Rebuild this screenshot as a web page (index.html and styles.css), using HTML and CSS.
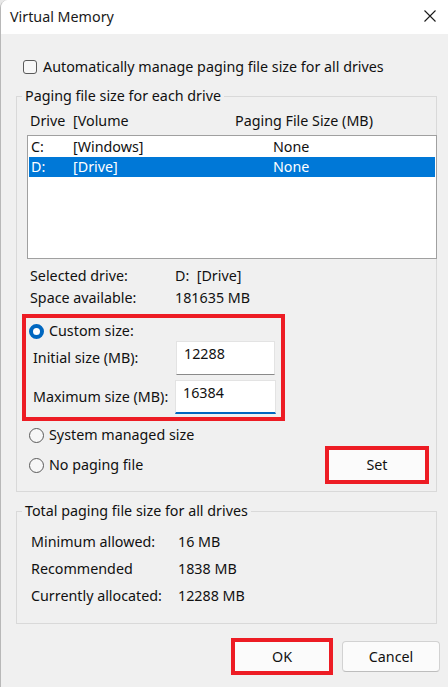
FILE: index.html
```html
<!DOCTYPE html>
<html lang="en">
<head>
<meta charset="utf-8">
<title>Virtual Memory</title>
<link rel="stylesheet" href="styles.css">
</head>
<body>
<div class="window">
  <div class="titlebar">
    <span class="title">Virtual Memory</span>
    <svg class="close" width="12" height="12" viewBox="0 0 12 12"><path d="M0.5 0.5 L11.5 11.5 M11.5 0.5 L0.5 11.5" stroke="#1a1a1a" stroke-width="1.1" fill="none"/></svg>
  </div>
  <div class="content">
    <div class="auto-row"><span class="checkbox"></span><span>Automatically manage paging file size for all drives</span></div>

    <fieldset class="group drives">
      <legend>Paging file size for each drive</legend>
      <div class="list-header"><span>Drive</span><span>[Volume</span><span>Paging File Size (MB)</span></div>
      <div class="listbox">
        <div class="list-row"><span>C:</span><span>[Windows]</span><span>None</span></div>
        <div class="list-row selected"><span>D:</span><span>[Drive]</span><span>None</span></div>
      </div>
      <div class="info">
        <span>Selected drive:</span><span>D:&nbsp; [Drive]</span>
        <span>Space available:</span><span>181635 MB</span>
      </div>
      <div class="highlight custom-box">
        <div class="radio-row"><span class="radio checked"></span><span>Custom size:</span></div>
        <div class="field-row"><span class="field-label">Initial size (MB):</span><span class="textbox">12288</span></div>
        <div class="field-row second"><span class="field-label">Maximum size (MB):</span><span class="textbox focused">16384</span></div>
      </div>
      <div class="radio-row system"><span class="radio"></span><span>System managed size</span></div>
      <div class="last-row">
        <div class="radio-row"><span class="radio"></span><span>No paging file</span></div>
        <div class="highlight set-box"><span class="button">Set</span></div>
      </div>
    </fieldset>

    <fieldset class="group totals">
      <legend>Total paging file size for all drives</legend>
      <div class="totals-grid">
        <span>Minimum allowed:</span><span>16 MB</span>
        <span>Recommended</span><span>1838 MB</span>
        <span>Currently allocated:</span><span>12288 MB</span>
      </div>
    </fieldset>

    <div class="footer">
      <div class="highlight ok-box"><span class="button">OK</span></div>
      <span class="button cancel">Cancel</span>
    </div>
  </div>
</div>
</body>
</html>
```

FILE: styles.css
```css
html, body {
  margin: 0;
  padding: 0;
  background: #e9e9e9;
}
body {
  width: 448px;
  height: 687px;
  overflow: hidden;
  font-family: "Noto Sans", "Open Sans", sans-serif;
  font-size: 14.3px;
  line-height: 20px;
  color: #111;
}
.window {
  height: 687px;
  background: #f0f0f0;
  border-left: 1px solid #b8b8b8;
  border-top-left-radius: 8px;
  overflow: hidden;
}
.titlebar {
  height: 34px;
  background: #fff;
  display: flex;
  align-items: center;
  justify-content: space-between;
  padding: 0 12px 0 9px;
}
.title {
  font-size: 14.3px;
  color: #1a1a1a;
}
.close {
  margin-top: -2px;
}
.content {
  padding: 0 11px 0 15px;
}
.auto-row {
  display: flex;
  align-items: center;
  gap: 6px;
  margin: 23px 0 0 7px;
  height: 20px;
}
.checkbox {
  width: 14px;
  height: 14px;
  box-sizing: border-box;
  border: 1px solid #5a5a5a;
  border-radius: 3px;
  background: #f7f7f7;
}
.group {
  margin: 9px 0 0 0;
  padding: 0;
  border: 1px solid #d9d9d9;
  min-width: 0;
}
.group legend {
  margin-left: 5px;
  padding: 0 3px;
  line-height: 20px;
}
.list-header {
  display: grid;
  grid-template-columns: 43px 162px auto;
  margin-top: 5px;
  padding-left: 13px;
}
.listbox {
  margin: 4px -1px 0 10px;
  height: 124px;
  box-sizing: border-box;
  border: 1px solid #a0a0a0;
  background: #fff;
  padding: 1px;
}
.list-row {
  display: grid;
  grid-template-columns: 42px 200px auto;
  height: 20px;
  padding-left: 2px;
}
.list-row.selected {
  background: #0078d7;
  color: #fff;
}
.info {
  display: grid;
  grid-template-columns: 145px auto;
  margin-top: 6px;
  padding-left: 13px;
  line-height: 22px;
}
.highlight {
  border: 4px solid #ed1c24;
  box-sizing: border-box;
}
.custom-box {
  margin: 5px 0 0 5px;
  width: 263px;
  padding: 3px 0 3px 3px;
}
.radio-row {
  display: flex;
  align-items: center;
  gap: 5px;
  height: 20px;
}
.radio {
  width: 15px;
  height: 15px;
  box-sizing: border-box;
  border-radius: 50%;
  border: 1px solid #5a5a5a;
  background: #f7f7f7;
}
.radio.checked {
  border: 4px solid #0067c0;
  background: #fff;
}
.field-row {
  display: flex;
  align-items: center;
  height: 34px;
  padding-left: 4px;
}
.field-row.second {
  margin-top: 5px;
}
.field-label {
  width: 143px;
}
.textbox {
  width: 99px;
  height: 34px;
  box-sizing: border-box;
  background: #fff;
  border: 1px solid #e3e3e3;
  border-bottom-color: #8a8a8a;
  padding: 2px 0 0 7px;
  line-height: 20px;
}
.textbox.focused {
  width: 101px;
  margin-left: -1px;
  border-bottom: 2px solid #0067c0;
}
.system {
  margin: 4px 0 0 12px;
}
.last-row {
  display: flex;
  align-items: center;
  justify-content: space-between;
  margin: 1px 7px 7px 12px;
}
.set-box {
  width: 104px;
  height: 38px;
  display: flex;
}
.button {
  flex: 1;
  display: flex;
  align-items: center;
  justify-content: center;
  background: #fbfbfb;
}
.totals {
  margin-top: 9px;
}
.totals-grid {
  display: grid;
  grid-template-columns: 147px auto;
  margin-top: 7px;
  padding: 0 0 14px 14px;
  line-height: 27px;
}
.footer {
  display: flex;
  justify-content: flex-end;
  align-items: center;
  gap: 9px;
  margin: 14px -3px 0 0;
}
.ok-box {
  width: 102px;
  height: 37px;
  display: flex;
}
.button.cancel {
  flex: none;
  width: 98px;
  height: 31px;
  box-sizing: border-box;
  border: 1px solid #d2d2d2;
  border-bottom-color: #bdbdbd;
  border-radius: 4px;
}
```
